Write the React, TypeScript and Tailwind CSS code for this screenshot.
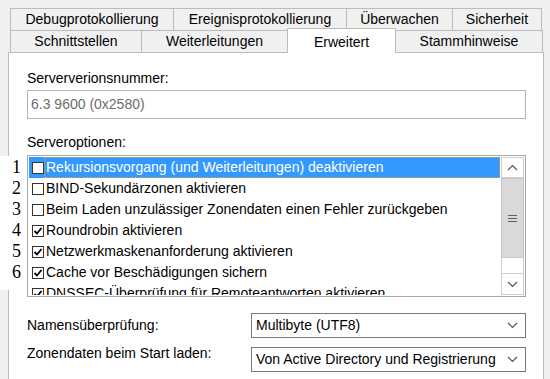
import React from "react";

const options = [
  { text: "Rekursionsvorgang (und Weiterleitungen) deaktivieren", checked: false },
  { text: "BIND-Sekundärzonen aktivieren", checked: false },
  { text: "Beim Laden unzulässiger Zonendaten einen Fehler zurückgeben", checked: false },
  { text: "Roundrobin aktivieren", checked: true },
  { text: "Netzwerkmaskenanforderung aktivieren", checked: true },
  { text: "Cache vor Beschädigungen sichern", checked: true },
  { text: "DNSSEC-Überprüfung für Remoteantworten aktivieren", checked: true },
];

function CheckBox({ checked }: { checked: boolean }) {
  return (
    <div className="w-[12px] h-[12px] border border-[#333] bg-white flex items-center justify-center shrink-0">
      {checked && (
        <svg width="10" height="10" viewBox="0 0 10 10">
          <path d="M1.5 5 L4 7.5 L8.5 2" stroke="#000" strokeWidth="1.8" fill="none" />
        </svg>
      )}
    </div>
  );
}

function Chevron({ up }: { up?: boolean }) {
  return (
    <svg width="11" height="7" viewBox="0 0 11 7">
      <path d={up ? "M1 6 L5.5 1.5 L10 6" : "M1 1 L5.5 5.5 L10 1"} stroke="#555" strokeWidth="1.2" fill="none" />
    </svg>
  );
}

function ComboBox({ value }: { value: string }) {
  return (
    <div className="w-[275px] h-[25px] border border-[#7a7a7a] bg-white flex items-center justify-between pl-[4px] pr-[7px]">
      <span>{value}</span>
      <Chevron />
    </div>
  );
}

export default function App() {
  return (
    <div className="relative w-[550px] h-[379px] overflow-hidden bg-[#f0f0f0] text-[14px] text-black font-['Liberation_Sans',Arial,sans-serif]">
      {/* Tabs row 1 */}
      <div className="flex ml-[10px] mt-[8px] h-[22px]">
        <div className="w-[164px] h-full border border-b-0 border-[#bcbcbc] flex items-center justify-center">Debugprotokollierung</div>
        <div className="w-[173px] h-full border border-l-0 border-b-0 border-[#bcbcbc] flex items-center justify-center">Ereignisprotokollierung</div>
        <div className="w-[106px] h-full border border-l-0 border-b-0 border-[#bcbcbc] flex items-center justify-center">Überwachen</div>
        <div className="w-[89px] h-full border border-l-0 border-b-0 border-[#bcbcbc] flex items-center justify-center">Sicherheit</div>
      </div>

      {/* Tabs row 2 */}
      <div className="flex ml-[10px] h-[22px] relative z-10">
        <div className="w-[132px] h-full border border-b-0 border-[#bcbcbc] flex items-center justify-center">Schnittstellen</div>
        <div className="w-[146px] h-full border border-l-0 border-b-0 border-[#bcbcbc] flex items-center justify-center">Weiterleitungen</div>
        <div className="w-[109px] h-[25px] -mt-[2px] -ml-px border border-b-0 border-[#bcbcbc] bg-white flex items-start pt-[3px] justify-center">Erweitert</div>
        <div className="w-[147px] h-full border border-l-0 border-b-0 border-[#bcbcbc] flex items-center justify-center">Stammhinweise</div>
      </div>

      {/* Panel */}
      <div className="ml-[8px] w-[536px] h-[340px] border border-[#bcbcbc] bg-white pl-[18px] pr-[17px] pt-[15px]">
        <div className="h-[20px] leading-[20px]">Serververionsnummer:</div>
        <div className="mt-[2px] h-[29px] border border-[#b4b4b4] px-[3px] flex items-center text-[#6d6d6d]">6.3 9600 (0x2580)</div>

        <div className="mt-[13px] h-[20px] leading-[20px]">Serveroptionen:</div>
        <div className="mt-[3px] h-[142px] border border-[#a8a8a8] p-px flex">
          <div className="flex-1 overflow-hidden">
            {options.map((o, i) => (
              <div key={i} className={`h-[21px] flex items-center pl-[3px] whitespace-nowrap ${i === 0 ? "bg-[#3399ff] text-white" : ""}`}>
                <CheckBox checked={o.checked} />
                {i === 0 ? (
                  <span className="flex-1 h-full flex items-center border border-dotted border-[#f0a040] pl-px">{o.text}</span>
                ) : (
                  <span className="pl-[2px]">{o.text}</span>
                )}
              </div>
            ))}
          </div>
          {/* Scrollbar */}
          <div className="w-[23px] flex flex-col ml-px">
            <div className="h-[21px] border border-[#d0d0d0] bg-white flex items-center justify-center">
              <Chevron up />
            </div>
            <div className="h-[80px] bg-[#dadada] border border-[#c4c4c4] flex flex-col items-center justify-center gap-[2px]">
              <div className="w-[9px] h-px bg-[#606060]" />
              <div className="w-[9px] h-px bg-[#606060]" />
              <div className="w-[9px] h-px bg-[#606060]" />
            </div>
            <div className="flex-1 border-x border-[#d0d0d0] bg-white" />
            <div className="h-[22px] border border-[#d0d0d0] bg-white flex items-center justify-center">
              <Chevron />
            </div>
          </div>
        </div>

        <div className="mt-[16px] flex flex-col gap-[9px]">
          <div className="flex items-center justify-between">
            <span>Namensüberprüfung:</span>
            <ComboBox value="Multibyte (UTF8)" />
          </div>
          <div className="flex items-center justify-between">
            <span className="-mt-[13px]">Zonendaten beim Start laden:</span>
            <ComboBox value="Von Active Directory und Registrierung" />
          </div>
        </div>
      </div>

      {/* Row numbers overlay */}
      <div className="absolute left-0 top-[156px] w-[26px] h-[134px] bg-white pt-px font-['Liberation_Serif',serif] text-[18px]">
        {[1, 2, 3, 4, 5, 6].map((n) => (
          <div key={n} className="h-[21px] leading-[21px] pl-[12px]">{n}</div>
        ))}
      </div>
    </div>
  );
}
